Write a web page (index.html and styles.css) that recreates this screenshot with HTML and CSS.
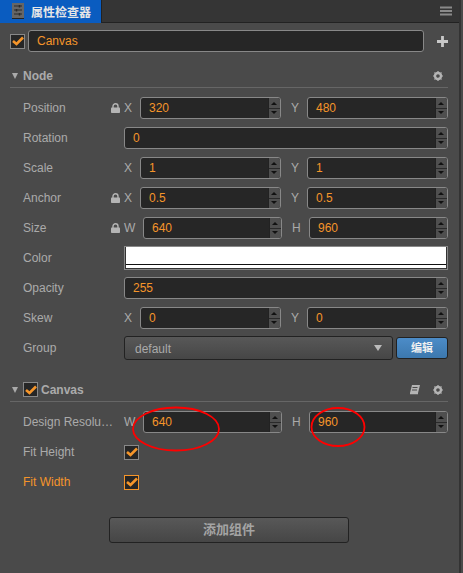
FILE: index.html
```html
<!DOCTYPE html>
<html lang="zh-CN">
<head>
  <meta charset="UTF-8" />
  <title>属性检查器</title>
  <link rel="stylesheet" href="styles.css">
</head>
<body>

<div class="window">
  <div class="tabBar">
    <div class="tab">
      <svg class="tabIcon" width="12" height="16" viewBox="0 0 12 16"><rect width="12" height="16" fill="#666"/><path d="M2 3h8M2 7h8M2 11h8" stroke="#2a2a2a" stroke-width="1.200"/><path d="M7.500 2v2.500M4.500 6v2.500M7.500 10v2.500" stroke="#2a2a2a" stroke-width="1.500"/><path d="M0 15.500h12" stroke="#222"/></svg>
      <span>属性检查器</span>
    </div>
    <svg class="menuIcon" width="12" height="10" viewBox="0 0 12 10"><path d="M0 1.500h12M0 5h12M0 8.500h12" stroke="#8a8a8a" stroke-width="2"/></svg>
  </div>

  <div class="panel">
    <div class="nameRow">
      <label class="check"><svg width="12" height="10" viewBox="0 0 12 10"><path d="M1 5l3.500 3L11 1.500" fill="none" stroke="#f5952a" stroke-width="2.600"/></svg></label>
      <div class="field nameField">Canvas</div>
      <svg class="plus" width="11" height="11" viewBox="0 0 11 11"><path d="M5.500 0v11M0 5.500h11" stroke="#c8c8c8" stroke-width="2.800"/></svg>
    </div>

    <div class="sectionHead nodeHead">
      <i class="arrow"></i>
      <b>Node</b>
      <svg class="gear" width="10" height="10" viewBox="0 0 10 10"><circle cx="5" cy="5" r="3" fill="none" stroke="#b4b4b4" stroke-width="2.400"/><path d="M5 0v10M0 5h10M1.500 1.500l7 7M8.500 1.500l-7 7" stroke="#b4b4b4" stroke-width="1.200" stroke-dasharray="1.600 6.800"/></svg>
    </div>

    <div class="row">
      <div class="label">Position</div>
      <div class="lockCell"><svg class="lock" width="9" height="10" viewBox="0 0 9 10"><path d="M2 5V3.300a2.500 2.500 0 0 1 5 0V5" fill="none" stroke="#b4b4b4" stroke-width="1.400"/><rect y="4.500" width="9" height="5.500" rx=".8" fill="#b4b4b4"/></svg></div>
      <div class="pair">
        <span class="axis">X</span><div class="field num">320<span class="spin"></span></div>
        <span class="axis y">Y</span><div class="field num">480<span class="spin"></span></div>
      </div>
    </div>
    <div class="row">
      <div class="label">Rotation</div>
      <div class="field num wide">0<span class="spin"></span></div>
    </div>
    <div class="row">
      <div class="label">Scale</div>
      <div class="lockCell"></div>
      <div class="pair">
        <span class="axis">X</span><div class="field num">1<span class="spin"></span></div>
        <span class="axis y">Y</span><div class="field num">1<span class="spin"></span></div>
      </div>
    </div>
    <div class="row">
      <div class="label">Anchor</div>
      <div class="lockCell"><svg class="lock" width="9" height="10" viewBox="0 0 9 10"><path d="M2 5V3.300a2.500 2.500 0 0 1 5 0V5" fill="none" stroke="#b4b4b4" stroke-width="1.400"/><rect y="4.500" width="9" height="5.500" rx=".8" fill="#b4b4b4"/></svg></div>
      <div class="pair">
        <span class="axis">X</span><div class="field num">0.5<span class="spin"></span></div>
        <span class="axis y">Y</span><div class="field num">0.5<span class="spin"></span></div>
      </div>
    </div>
    <div class="row">
      <div class="label">Size</div>
      <div class="lockCell"><svg class="lock" width="9" height="10" viewBox="0 0 9 10"><path d="M2 5V3.300a2.500 2.500 0 0 1 5 0V5" fill="none" stroke="#b4b4b4" stroke-width="1.400"/><rect y="4.500" width="9" height="5.500" rx=".8" fill="#b4b4b4"/></svg></div>
      <div class="pair wh">
        <span class="axis">W</span><div class="field num">640<span class="spin"></span></div>
        <span class="axis y">H</span><div class="field num">960<span class="spin"></span></div>
      </div>
    </div>
    <div class="row">
      <div class="label">Color</div>
      <div class="colorBox"><div class="colorFill"></div></div>
    </div>
    <div class="row">
      <div class="label">Opacity</div>
      <div class="field num wide">255<span class="spin"></span></div>
    </div>
    <div class="row">
      <div class="label">Skew</div>
      <div class="lockCell"></div>
      <div class="pair">
        <span class="axis">X</span><div class="field num">0<span class="spin"></span></div>
        <span class="axis y">Y</span><div class="field num">0<span class="spin"></span></div>
      </div>
    </div>
    <div class="row">
      <div class="label">Group</div>
      <div class="select">default<i class="selectArrow"></i></div>
      <div class="blueBtn">编辑</div>
    </div>

    <div class="sectionHead canvasHead">
      <i class="arrow"></i>
      <label class="check small"><svg width="12" height="10" viewBox="0 0 12 10"><path d="M1 5l3.500 3L11 1.500" fill="none" stroke="#f5952a" stroke-width="2.600"/></svg></label>
      <b>Canvas</b>
      <svg class="book" width="11" height="10" viewBox="0 0 11 10"><path d="M3 0h8L9 8H1z" fill="#b4b4b4"/><path d="M1 8.500h8" stroke="#b4b4b4" stroke-width="1.500"/><path d="M3.500 2.500h5M3 5h5" stroke="#4a4a4a"/></svg>
      <svg class="gear" width="10" height="10" viewBox="0 0 10 10"><circle cx="5" cy="5" r="3" fill="none" stroke="#b4b4b4" stroke-width="2.400"/><path d="M5 0v10M0 5h10M1.500 1.500l7 7M8.500 1.500l-7 7" stroke="#b4b4b4" stroke-width="1.200" stroke-dasharray="1.600 6.800"/></svg>
    </div>

    <div class="row">
      <div class="label">Design Resolu…</div>
      <div class="pair wh">
        <span class="axis">W</span><div class="field num">640<span class="spin"></span></div>
        <span class="axis y">H</span><div class="field num">960<span class="spin"></span></div>
      </div>
    </div>
    <div class="row">
      <div class="label">Fit Height</div>
      <label class="check"><svg width="12" height="10" viewBox="0 0 12 10"><path d="M1 5l3.500 3L11 1.500" fill="none" stroke="#f5952a" stroke-width="2.600"/></svg></label>
    </div>
    <div class="row">
      <div class="label active">Fit Width</div>
      <label class="check activeCheck"><svg width="12" height="10" viewBox="0 0 12 10"><path d="M1 5l3.500 3L11 1.500" fill="none" stroke="#f5952a" stroke-width="2.600"/></svg></label>
    </div>

    <div class="addRow"><div class="addBtn">添加组件</div></div>
  </div>

  <!-- 手繪標註 -->
  <svg class="marks" width="463" height="573" viewBox="0 0 463 573">
    <ellipse cx="176" cy="429" rx="43" ry="21.500" fill="none" stroke="#f00" stroke-width="1.800"/>
    <ellipse cx="338" cy="427" rx="26.500" ry="19" fill="none" stroke="#f00" stroke-width="1.800"/>
  </svg>
</div>

</body>
</html>
```

FILE: styles.css
```css
* { box-sizing: border-box; }
body {
  margin: 0;
  font-family: "Liberation Sans", "Noto Sans CJK SC", sans-serif;
  font-size: 12px;
  color: #aaa;
  background-color: #4a4a4a;
  overflow: hidden;
}
.window {
  position: relative;
  width: 461px;
  height: 573px;
  border-right: 2px solid #333;
  background-color: #4a4a4a;
}
.tabBar {
  height: 23px;
  display: flex;
  align-items: center;
  justify-content: space-between;
  padding-right: 7px;
  background-color: #353535;
  border-bottom: 1px solid #222;
}
.tab {
  width: 102px;
  height: 23px;
  display: flex;
  align-items: center;
  gap: 7px;
  padding-left: 12px;
  background-color: #0a5cc0;
  color: #e6e6e6;
  font-weight: bold;
  border-right: 1px solid #222;
}
.panel { padding: 7px 11px 0 10px; }
.nameRow {
  display: flex;
  align-items: center;
  height: 22px;
}
.check {
  width: 15px;
  height: 15px;
  display: flex;
  align-items: center;
  justify-content: center;
  flex: none;
  border: 1px solid #888;
  background-color: #262626;
}
.activeCheck { border-color: #f5952a; }
.nameField {
  flex: 1;
  margin-left: 3px;
}
.plus { flex: none; margin-left: 13px; }
.field {
  height: 22px;
  line-height: 20px;
  padding-left: 8px;
  border: 1px solid #888;
  border-radius: 3px;
  background-color: #262626;
  color: #f5952a;
  font-size: 12px;
}
.sectionHead {
  display: flex;
  align-items: center;
  height: 24px;
  border-bottom: 1px solid #666;
  color: #aaa;
}
.sectionHead b { margin-left: 4px; flex: 1; font-size: 12px; }
.nodeHead { margin-top: 12px; margin-bottom: 9px; }
.canvasHead { margin-top: 19px; margin-bottom: 9px; }
.arrow {
  width: 0;
  height: 0;
  margin-left: 2px;
  margin-right: 1px;
  border-left: 3.500px solid transparent;
  border-right: 3.500px solid transparent;
  border-top: 6px solid #aaa;
}
.canvasHead .check { margin-left: 4px; }
.canvasHead b { margin-left: 3px; }
.gear { margin-right: 5px; }
.book { margin-right: 13px; }
.row {
  display: flex;
  align-items: center;
  height: 22px;
  margin-bottom: 8px;
  padding-left: 13px;
}
.label { width: 101px; flex: none; white-space: nowrap; }
.label.active { color: #f5952a; }
.lockCell { width: 0; position: relative; }
.lock { position: absolute; left: -13px; top: -5px; }
.pair { flex: 1; display: flex; align-items: center; }
.axis { width: 16px; flex: none; font-size: 12px; }
.axis.y { width: 26px; padding-left: 10px; }
.pair .field { flex: 1; min-width: 0; }
.wh .axis { width: 19px; }
.wh .axis.y { width: 27px; }
.num { position: relative; }
.wide { flex: 1; }
.spin {
  position: absolute;
  top: 0;
  right: 0;
  bottom: 0;
  width: 12px;
  border-left: 1px solid #222;
  border-radius: 0 2px 2px 0;
  background:
    linear-gradient(#2a2a2a, #2a2a2a) center / 100% 1px no-repeat,
    #4f4f4f;
}
.spin::before, .spin::after {
  content: "";
  position: absolute;
  left: 2px;
  border-left: 3px solid transparent;
  border-right: 3px solid transparent;
}
.spin::before { top: 4px; border-bottom: 3px solid #111; }
.spin::after { bottom: 4px; border-top: 3px solid #111; }
.colorBox {
  flex: 1;
  height: 24px;
  padding: 0 1px 1px;
  border: 1px solid #888;
  background-color: #333;
}
.colorFill {
  height: 100%;
  background-image: linear-gradient(to bottom, #fff 17px, #111 17px, #111 18px, #fff 18px);
}
.select {
  flex: 1;
  height: 24px;
  line-height: 24px;
  padding-left: 10px;
  position: relative;
  border: 1px solid #222;
  border-radius: 3px;
  background-image: linear-gradient(to bottom, #585858, #464646);
}
.selectArrow {
  position: absolute;
  right: 10px;
  top: 8px;
  border-left: 4.500px solid transparent;
  border-right: 4.500px solid transparent;
  border-top: 6px solid #bbb;
}
.blueBtn {
  width: 52px;
  height: 22px;
  flex: none;
  margin-left: 3px;
  line-height: 20px;
  text-align: center;
  font-size: 11px;
  font-weight: bold;
  color: #f0f0f0;
  border: 1px solid #222;
  border-radius: 3px;
  background-image: linear-gradient(to bottom, #4c8cc8, #3c78ae);
}
.addRow { display: flex; justify-content: center; margin-top: 24px; }
.addBtn {
  width: 240px;
  height: 26px;
  line-height: 24px;
  text-align: center;
  font-size: 13px;
  font-weight: bold;
  color: #a4a4a4;
  border: 1px solid #222;
  border-radius: 3px;
  background-image: linear-gradient(to bottom, #585858, #464646);
}
.marks {
  position: absolute;
  top: 0;
  left: 0;
  pointer-events: none;
}
```
